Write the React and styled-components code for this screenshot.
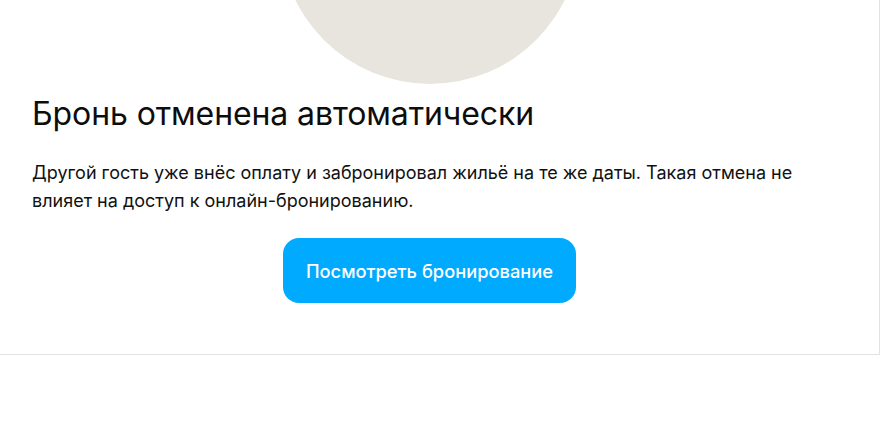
import React from "react";
import styled, { createGlobalStyle } from "styled-components";

const GlobalStyle = createGlobalStyle`
  html, body {
    margin: 0;
    padding: 0;
    background: #ffffff;
    font-family: Inter, "Noto Sans", sans-serif;
    color: #111111;
  }
`;

const Card = styled.section`
  box-sizing: border-box;
  width: 880px;
  padding: 0 52px 51px 32px;
  background: #ffffff;
  border-right: 1px solid #e2e2e2;
  border-bottom: 1px solid #e2e2e2;
  overflow: hidden;
`;

const Illustration = styled.div`
  width: 300px;
  height: 300px;
  margin: -216px auto 0;
  border-radius: 50%;
  background: #e7e5de;
`;

const Title = styled.h1`
  margin: 10px 0 0;
  font-size: 32px;
  line-height: 40px;
  font-weight: 400;
  letter-spacing: -0.1px;
  color: #0d0d0d;
`;

const Text = styled.p`
  margin: 25px 0 0;
  font-size: 18px;
  line-height: 28px;
  color: #111111;
`;

const Actions = styled.div`
  display: flex;
  justify-content: center;
  margin-top: 23px;
`;

const Button = styled.button`
  height: 65px;
  padding: 0 23px;
  border: none;
  border-radius: 16px;
  background: ${({ $variant }) => ($variant === "primary" ? "#00aaff" : "#f2f2f2")};
  color: ${({ $variant }) => ($variant === "primary" ? "#ffffff" : "#111111")};
  font-family: Inter, "Noto Sans", sans-serif;
  font-size: 18.3px;
  font-weight: 500;
  cursor: pointer;
`;

const App = () => {
  return (
    <>
      <GlobalStyle />
      <Card>
        <Illustration />
        <Title>Бронь отменена автоматически</Title>
        <Text>
          Другой гость уже внёс оплату и забронировал жильё на те же даты. Такая
          отмена не влияет на доступ к онлайн-бронированию.
        </Text>
        <Actions>
          <Button $variant="primary">Посмотреть бронирование</Button>
        </Actions>
      </Card>
    </>
  );
};

export default App;
